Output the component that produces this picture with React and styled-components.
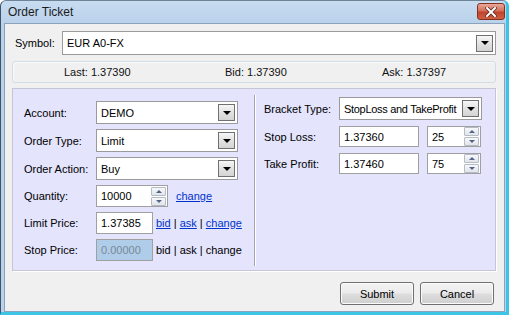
import React from "react";
import styled, { createGlobalStyle } from "styled-components";

const GlobalStyle = createGlobalStyle`
  html, body {
    margin: 0;
    padding: 0;
    background: #ffffff;
  }
  body {
    font-family: "Liberation Sans", Arial, sans-serif;
    font-size: 11px;
    color: #000;
  }
`;

const Frame = styled.div`
  width: 509px;
  height: 315px;
  box-sizing: border-box;
  display: flex;
  flex-direction: column;
  background: linear-gradient(#c8dcf1, #b9d1ea 22px, #b9d1ea);
  border-left: 1px solid #3e5268;
  border-top: 1px solid #6f8399;
  border-right: 3px solid #3cc4e6;
  border-bottom: 3px solid #3cc4e6;
  border-radius: 6px 6px 0 0;
  padding: 0 1px 0 3px;
`;

const TitleBar = styled.div`
  height: 22px;
  display: flex;
  align-items: center;
  justify-content: space-between;
  padding-left: 4px;
  font-size: 12px;
  color: #1b1b1b;
`;

const CloseButton = styled.div`
  width: 26px;
  height: 15px;
  margin-top: -1px;
  border: 1px solid #84301f;
  border-radius: 3px;
  background: linear-gradient(#e9a899, #d46f59 45%, #c2442c 55%, #cf5f41);
  display: flex;
  align-items: center;
  justify-content: center;
`;

const Client = styled.div`
  flex: 1;
  background: #f0f0f0;
  border: 1px solid #8ba2bb;
  padding: 7px 8px 0 7px;
  display: flex;
  flex-direction: column;
`;

const SymbolRow = styled.div`
  display: flex;
  align-items: center;
  padding-left: 3px;
`;

const Label = styled.div`
  width: ${(p) => p.w}px;
  flex-shrink: 0;
  white-space: nowrap;
`;

const ComboBox = styled.div`
  box-sizing: border-box;
  height: ${(p) => p.h || 23}px;
  width: ${(p) => (p.w ? `${p.w}px` : "auto")};
  flex: ${(p) => (p.w ? "none" : 1)};
  background: #fff;
  border: 1px solid #9a9a9a;
  display: flex;
  align-items: center;
  justify-content: space-between;
  padding: 0 2px 0 4px;
  white-space: nowrap;
  letter-spacing: ${(p) => p.ls || 0}px;
`;

const ArrowButton = styled.div`
  box-sizing: border-box;
  width: 17px;
  height: ${(p) => p.h || 17}px;
  flex: none;
  border: 1px solid #707070;
  background: linear-gradient(#f6f6f6, #e2e2e2 50%, #d4d4d4);
  display: flex;
  align-items: center;
  justify-content: center;
  &::after {
    content: "";
    border-left: 4px solid transparent;
    border-right: 4px solid transparent;
    border-top: 4px solid #000;
  }
`;

const InfoBar = styled.div`
  margin-top: 6px;
  height: 22px;
  box-sizing: border-box;
  border: 1px solid #d2dce5;
  border-radius: 3px;
  box-shadow: inset 1px 1px 0 #fafafa;
  display: grid;
  grid-template-columns: 161px 157px auto;
  align-items: center;
  padding-left: 51px;
  color: #111;
`;

const Panel = styled.div`
  margin-top: 5px;
  height: 183px;
  box-sizing: border-box;
  background: #e4e4fc;
  border: 1px solid #c5c5d3;
  box-shadow: 1px 1px 0 #ffffff;
  display: flex;
  padding: 6px 0 4px 0;
`;

const Column = styled.div`
  box-sizing: border-box;
  width: ${(p) => (p.w ? `${p.w}px` : "auto")};
  flex: ${(p) => (p.w ? "none" : 1)};
  display: flex;
  flex-direction: column;
  gap: ${(p) => p.gap}px;
  padding-left: ${(p) => p.pl}px;
  padding-top: ${(p) => p.pt}px;
`;

const Divider = styled.div`
  width: 0;
  border-left: 1px solid #a3a3b0;
  border-right: 1px solid #ffffff;
`;

const Row = styled.div`
  display: flex;
  align-items: center;
`;

const TextBox = styled.div`
  box-sizing: border-box;
  height: ${(p) => p.h || 22}px;
  width: ${(p) => p.w}px;
  flex: none;
  background: ${(p) => (p.disabled ? "#afcce8" : "#fff")};
  color: ${(p) => (p.disabled ? "#7a8a9a" : "#000")};
  border: 1px solid #a0a0a0;
  margin-left: ${(p) => p.ml || 0}px;
  display: flex;
  align-items: center;
  justify-content: space-between;
  padding: 0 1px 0 4px;
`;

const Spin = styled.div`
  display: flex;
  flex-direction: column;
  gap: 1px;
`;

const SpinButton = styled.div`
  box-sizing: border-box;
  width: 15px;
  height: 9px;
  border: 1px solid #b4bcc6;
  border-radius: 1px;
  background: linear-gradient(#f7f8fa, #e1e4e9);
  display: flex;
  align-items: center;
  justify-content: center;
  &::after {
    content: "";
    border-left: 3px solid transparent;
    border-right: 3px solid transparent;
    ${(p) =>
      p.up
        ? "border-bottom: 3px solid #4f6488;"
        : "border-top: 3px solid #4f6488;"}
  }
`;

const Links = styled.div`
  margin-left: ${(p) => p.ml}px;
  white-space: nowrap;
  color: #000;
`;

const Link = styled.a`
  color: #0033cc;
  text-decoration: underline;
  cursor: pointer;
`;

const ButtonBar = styled.div`
  margin-top: 11px;
  display: flex;
  justify-content: flex-end;
  gap: 6px;
  padding-right: 2px;
`;

const Button = styled.button`
  width: 74px;
  height: 23px;
  border: 1px solid #707070;
  border-radius: 3px;
  background: linear-gradient(#f3f3f3, #ebebeb 48%, #dddddd 52%, #cfcfcf);
  box-shadow: inset 0 0 0 1px #fbfbfb;
  font-family: "Liberation Sans", Arial, sans-serif;
  font-size: 11px;
  color: #000;
  padding: 0;
`;

const Spinner = () => (
  <Spin>
    <SpinButton up />
    <SpinButton />
  </Spin>
);

const Combo = ({ value, ...props }) => (
  <ComboBox {...props}>
    <span>{value}</span>
    <ArrowButton />
  </ComboBox>
);

const App = () => {
  return (
    <>
      <GlobalStyle />
      <Frame>
        <TitleBar>
          <span>Order Ticket</span>
          <CloseButton>
            <svg width="12" height="10" viewBox="0 0 12 10">
              <path
                d="M2 1 L10 9 M10 1 L2 9"
                stroke="#5a2a20"
                strokeWidth="3.6"
                strokeLinecap="square"
              />
              <path
                d="M2 1 L10 9 M10 1 L2 9"
                stroke="#ffffff"
                strokeWidth="2"
                strokeLinecap="square"
              />
            </svg>
          </CloseButton>
        </TitleBar>
        <Client>
          <SymbolRow>
            <Label w={47}>Symbol:</Label>
            <Combo value="EUR A0-FX" h={24} />
          </SymbolRow>
          <InfoBar>
            <span>Last: 1.37390</span>
            <span>Bid: 1.37390</span>
            <span>Ask: 1.37397</span>
          </InfoBar>
          <Panel>
            <Column w={241} gap={5} pl={11} pt={6}>
              <Row>
                <Label w={72}>Account:</Label>
                <Combo value="DEMO" w={142} />
              </Row>
              <Row>
                <Label w={72}>Order Type:</Label>
                <Combo value="Limit" w={142} />
              </Row>
              <Row>
                <Label w={72}>Order Action:</Label>
                <Combo value="Buy" w={142} />
              </Row>
              <Row>
                <Label w={72}>Quantity:</Label>
                <TextBox w={72}>
                  <span>10000</span>
                  <Spinner />
                </TextBox>
                <Links ml={8}>
                  <Link>change</Link>
                </Links>
              </Row>
              <Row>
                <Label w={72}>Limit Price:</Label>
                <TextBox w={57}>1.37385</TextBox>
                <Links ml={3}>
                  <Link>bid</Link> | <Link>ask</Link> | <Link>change</Link>
                </Links>
              </Row>
              <Row>
                <Label w={72}>Stop Price:</Label>
                <TextBox w={57} disabled>
                  0.00000
                </TextBox>
                <Links ml={3}>bid | ask | change</Links>
              </Row>
            </Column>
            <Divider />
            <Column gap={6} pl={8} pt={2}>
              <Row>
                <Label w={75}>Bracket Type:</Label>
                <Combo value="StopLoss and TakeProfit" w={143} ls={-0.3} />
              </Row>
              <Row>
                <Label w={75}>Stop Loss:</Label>
                <TextBox w={80} h={21}>
                  1.37360
                </TextBox>
                <TextBox w={54} h={21} ml={8}>
                  <span>25</span>
                  <Spinner />
                </TextBox>
              </Row>
              <Row>
                <Label w={75}>Take Profit:</Label>
                <TextBox w={80} h={21}>
                  1.37460
                </TextBox>
                <TextBox w={54} h={21} ml={8}>
                  <span>75</span>
                  <Spinner />
                </TextBox>
              </Row>
            </Column>
          </Panel>
          <ButtonBar>
            <Button>Submit</Button>
            <Button>Cancel</Button>
          </ButtonBar>
        </Client>
      </Frame>
    </>
  );
};

export default App;
